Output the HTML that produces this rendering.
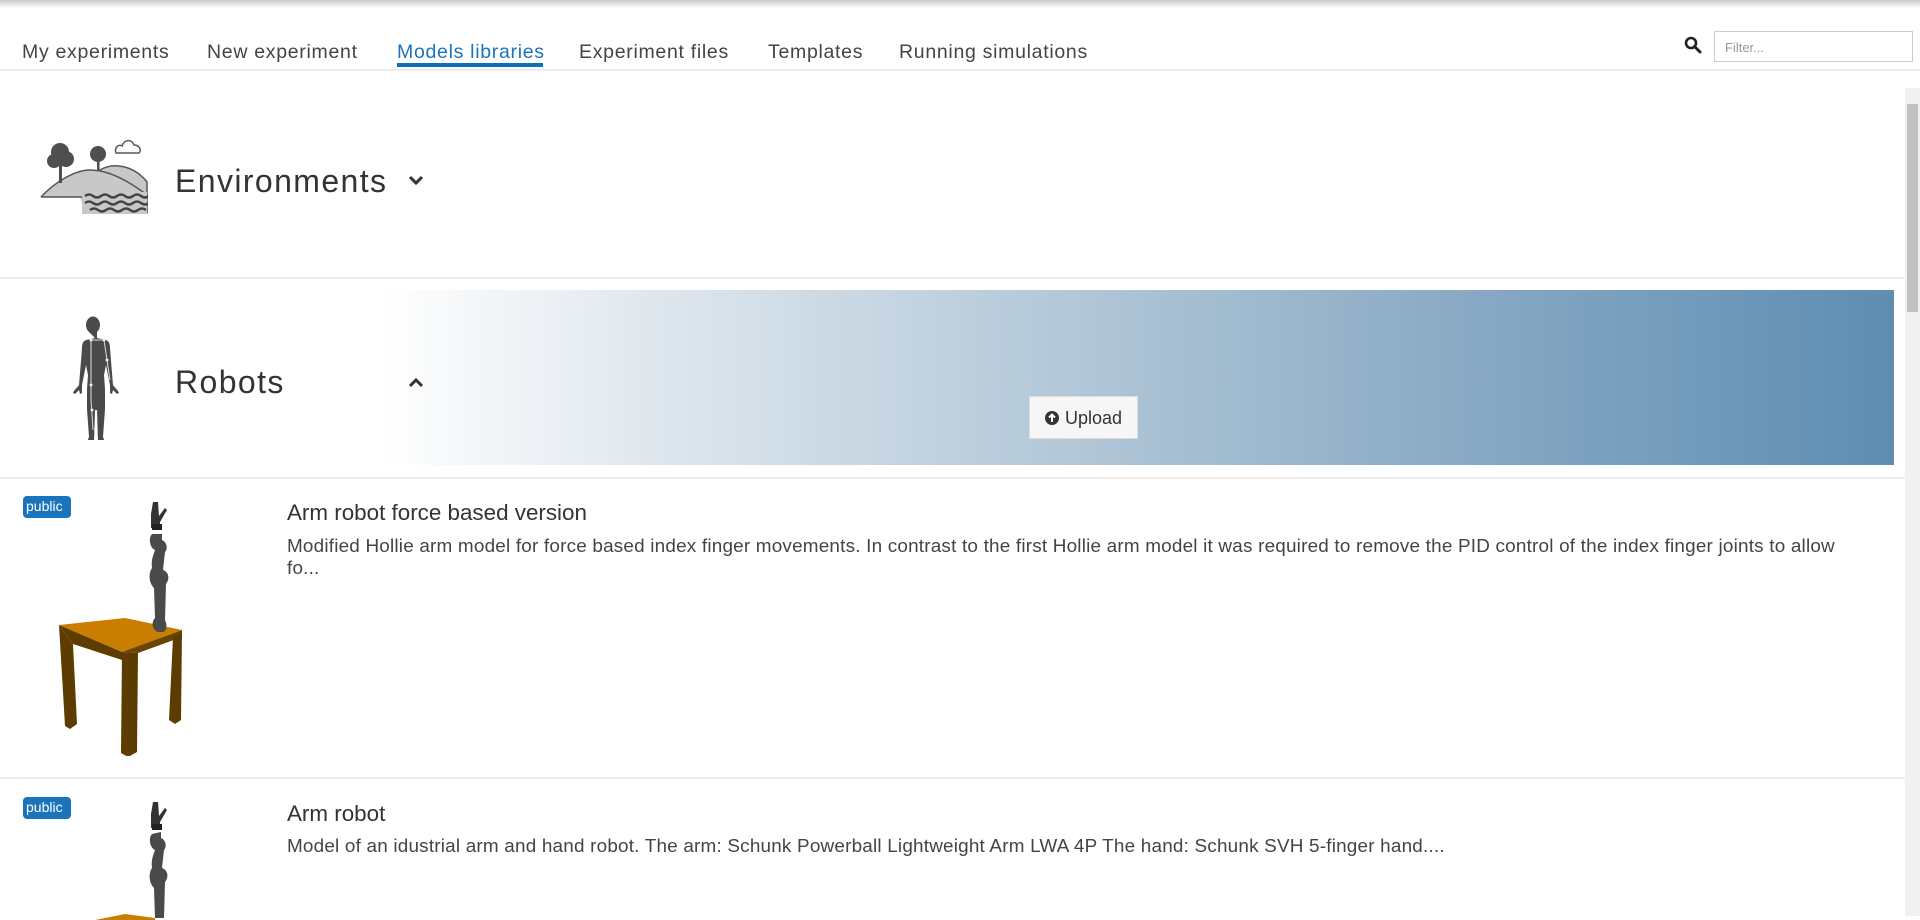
<!DOCTYPE html>
<html><head><meta charset="utf-8"><style>
*{margin:0;padding:0;box-sizing:border-box}
body{width:1920px;height:916px;overflow:hidden;background:#fff;font-family:"Liberation Sans",sans-serif;color:#333;position:relative}
.shadow{position:absolute;left:0;top:0;width:1920px;height:8px;background:linear-gradient(#c8c8c8,#fff)}
.nav{position:absolute;top:0;left:0;width:1920px;height:71px;border-bottom:2px solid #eee}
.nav span{position:absolute;top:41px;font-size:19.5px;color:#444;letter-spacing:0.7px}
.nav span.act{color:#1a74bb}
.ul{position:absolute;left:397px;top:63px;width:146px;height:4px;background:#0d6fb5}
.filter{position:absolute;left:1714px;top:31px;width:199px;height:31px;border:1px solid #ccc;font-size:13px;color:#999;padding:8px 10px}
.sb{position:absolute;left:1905px;top:88px;width:15px;height:828px;background:#f1f1f1}
.thumb{position:absolute;left:1907px;top:104px;width:11px;height:208px;background:#c1c1c1}
.h{position:absolute;font-size:32px;color:#333;letter-spacing:1.4px}
.sep{position:absolute;left:0;width:1905px;height:2px;background:#eee}
.grad{position:absolute;left:380px;top:290px;width:1514px;height:175px;background:linear-gradient(90deg,#fff 0%,#dfe7ee 18%,#b3c8d8 45%,#88a9c4 72%,#5e8db2 100%)}
.btn{position:absolute;left:1029px;top:396px;width:109px;height:43px;background:#f6f6f6;border:1px solid #ddd;font-size:18px;color:#333;padding:11px 0 0 14px}
.badge{position:absolute;left:23px;width:48px;height:22px;background:#1a74bb;color:#fff;border-radius:4px;font-size:14px;padding:2px 0 0 3px}
.t{position:absolute;left:287px;font-size:22.4px;color:#333}
.d{position:absolute;left:287px;font-size:18.9px;color:#444;line-height:22px;width:1560px;letter-spacing:0.2px}
</style></head><body>
<div class="shadow"></div>
<div class="nav">
<span style="left:22px">My experiments</span>
<span style="left:207px">New experiment</span>
<span class="act" style="left:397px">Models libraries</span>
<span style="left:579px">Experiment files</span>
<span style="left:768px">Templates</span>
<span style="left:899px">Running simulations</span>
<div class="ul"></div>
<svg style="position:absolute;left:1684px;top:36px" width="18" height="18" viewBox="0 0 18 18"><circle cx="7" cy="7" r="5" fill="none" stroke="#222" stroke-width="2.6"/><path d="M10.5 10.5L16 16" stroke="#222" stroke-width="3" stroke-linecap="round"/></svg>
<div class="filter">Filter...</div>
</div>
<div class="sb"></div><div class="thumb"></div>

<svg style="position:absolute;left:40px;top:137px" width="108" height="78" viewBox="0 0 108 78">
<path d="M60 33 C75 24 95 30 107 45 L107 76 L70 76Z" fill="#c8c8c8" stroke="#555" stroke-width="1.5"/>
<path d="M1 60 C15 45 35 33 50 33 C70 33 90 45 107 58 L107 76 L45 76 L40 60Z" fill="#c8c8c8"/>
<path d="M1 60 C15 45 35 33 50 33 C70 33 90 45 107 58" fill="none" stroke="#555" stroke-width="1.5"/>
<path d="M1 60 L45 60" stroke="#555" stroke-width="1.5"/>
<circle cx="20" cy="15" r="9" fill="#4f4f4f"/><circle cx="26" cy="22" r="8" fill="#4f4f4f"/><circle cx="14" cy="24" r="7" fill="#4f4f4f"/><rect x="19" y="24" width="3" height="22" fill="#4f4f4f"/>
<circle cx="58" cy="17" r="8" fill="#4f4f4f"/><rect x="57" y="20" width="2.5" height="14" fill="#4f4f4f"/>
<path d="M76 16 C74 10 79 7 82 9 C84 2 92 2 94 8 C99 8 102 13 99 16Z" fill="none" stroke="#555" stroke-width="1.5"/>
<rect x="42" y="55" width="65" height="22" fill="#c8c8c8"/>
<path d="M45 59 q4 -3 8 0 t8 0 t8 0 t8 0 t8 0 t8 0 t8 0 t8 0 M45 66 q4 -3 8 0 t8 0 t8 0 t8 0 t8 0 t8 0 t8 0 t8 0 M50 73 q4 -3 8 0 t8 0 t8 0 t8 0 t8 0 t8 0 t8 0" fill="none" stroke="#444" stroke-width="2.5"/>
</svg>
<div class="h" style="left:175px;top:163px">Environments</div>
<svg style="position:absolute;left:408px;top:175px" width="16" height="12"><path d="M2 2L8 8L14 2" fill="none" stroke="#333" stroke-width="3"/></svg>
<div class="sep" style="top:277px"></div>

<div class="grad"></div>
<svg style="position:absolute;left:60px;top:310px" width="64" height="130" viewBox="0 0 64 130">
<ellipse cx="33" cy="15" rx="7" ry="8.5" fill="#4a4a4a"/>
<path d="M29 22h8v6l9 2c3 1 4 4 4 8l2 25 1 12c2 3 5 5 6 8l-2 1-4-4-1 4-2-1 0-8-4-20-2 10 1 14 0 20-2 28 2 5h-7l-1-32-2 0-1 32h-7l2-5-2-28 0-20 1-14-2-10-4 20 0 8-2 1-1-4-4 4-2-1c1-3 4-5 6-8l1-12 2-25c0-4 1-7 4-8l9-2z" fill="#4a4a4a"/>
<path d="M31 30 L31 90 L33 120 M31 30 L44 30 L47 50 L50 70" fill="none" stroke="#ddd" stroke-width="1"/>
<circle cx="31" cy="30" r="1.5" fill="#eee"/><circle cx="44" cy="30" r="1.5" fill="#eee"/><circle cx="47" cy="50" r="1.5" fill="#eee"/><circle cx="31" cy="75" r="1.5" fill="#eee"/><circle cx="32" cy="100" r="1.5" fill="#eee"/>
</svg>
<div class="h" style="left:175px;top:364px">Robots</div>
<svg style="position:absolute;left:408px;top:376px" width="16" height="12"><path d="M2 10L8 4L14 10" fill="none" stroke="#333" stroke-width="3"/></svg>
<div class="btn"><svg width="16" height="16" viewBox="0 0 16 16" style="vertical-align:-2px"><circle cx="8" cy="8" r="7" fill="#333"/><path d="M8 12V5M5 7.5L8 4.5L11 7.5" stroke="#fff" stroke-width="2" fill="none"/></svg> Upload</div>
<div class="sep" style="top:477px"></div>

<div class="badge" style="top:496px">public</div>
<svg style="position:absolute;left:55px;top:500px" width="150" height="256" viewBox="0 0 150 256">
<path d="M4 125L70 118L127 130L67 152Z" fill="#c97e00"/>
<path d="M4 125L67 152L67 160L18 144Z" fill="#5c3c00"/>
<path d="M67 152L127 130L127 137L83 153Z" fill="#6a4500"/>
<path d="M4 125L18 144L22 224L15 229L10 226Z" fill="#5c3c00"/>
<path d="M67 152L83 153L82 252L73 257L66 253Z" fill="#5c3c00"/>
<path d="M118 137L127 132L126 220L120 224L114 220Z" fill="#5c3c00"/>
<path d="M98 2l5 0 1 14 6-8 2 2-7 12 0 6-9 0 0-14z" fill="#333"/>
<rect x="97" y="24" width="10" height="6" fill="#222"/>
<path d="M97 34c-4 4 -2 14 3 16c-2 6-4 10-3 18c-3 4-4 14 2 20l1 30c-4 4-3 12 3 14l6 0c3-3 3-8 1-12l1-36c4-5 3-12-3-14l2-18c3-3 2-10-3-12l0-6z" fill="#4a4a4a"/>
</svg>
<div class="t" style="top:500px">Arm robot force based version</div>
<div class="d" style="top:536px">Modified Hollie arm model for force based index finger movements. In contrast to the first Hollie arm model it was required to remove the PID control of the index finger joints to allow fo...</div>
<div class="sep" style="top:777px"></div>

<div class="badge" style="top:797px">public</div>
<svg style="position:absolute;left:55px;top:800px" width="150" height="120" viewBox="0 0 150 120">
<path d="M40 120L70 114L100 118L100 120Z" fill="#c97e00"/>
<path d="M98 2l5 0 1 14 6-8 2 2-7 12 0 6-9 0 0-14z" fill="#333"/>
<rect x="97" y="24" width="10" height="6" fill="#222"/>
<path d="M97 34c-4 4 -2 14 3 16c-2 6-4 10-3 18c-3 4-4 14 2 20l1 30h9l1-36c4-5 3-12-3-14l2-18c3-3 2-10-3-12l0-6z" fill="#4a4a4a"/>
</svg>
<div class="t" style="top:801px">Arm robot</div>
<div class="d" style="top:836px">Model of an idustrial arm and hand robot. The arm: Schunk Powerball Lightweight Arm LWA 4P The hand: Schunk SVH 5-finger hand....</div>
</body></html>
